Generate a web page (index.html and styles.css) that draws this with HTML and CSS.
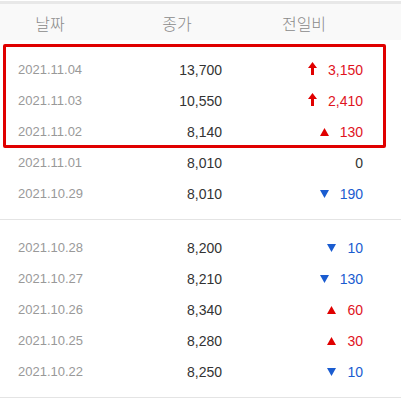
FILE: index.html
```html
<!DOCTYPE html>
<html lang="ko">
<head>
<meta charset="utf-8">
<link rel="stylesheet" href="styles.css">
</head>
<body>
<div class="board">
  <div class="head">
    <div class="hcell">날짜</div>
    <div class="hcell">종가</div>
    <div class="hcell">전일비</div>
  </div>
  <div class="section first">
    <div class="row"><span class="date">2021.11.04</span><span class="price">13,700</span><span class="chg up"><svg class="arr" width="9" height="13" viewBox="0 0 9 13"><path d="M4.5 0 L9 6 L6 6 L6 13 L3 13 L3 6 L0 6 Z"/></svg>3,150</span></div>
    <div class="row"><span class="date">2021.11.03</span><span class="price">10,550</span><span class="chg up"><svg class="arr" width="9" height="13" viewBox="0 0 9 13"><path d="M4.5 0 L9 6 L6 6 L6 13 L3 13 L3 6 L0 6 Z"/></svg>2,410</span></div>
    <div class="row"><span class="date">2021.11.02</span><span class="price">8,140</span><span class="chg up"><svg class="tri" width="9" height="8" viewBox="0 0 9 8"><path d="M4.5 0 L9 8 L0 8 Z"/></svg>130</span></div>
    <div class="row"><span class="date">2021.11.01</span><span class="price">8,010</span><span class="chg flat">0</span></div>
    <div class="row"><span class="date">2021.10.29</span><span class="price">8,010</span><span class="chg down"><svg class="tri" width="9" height="8" viewBox="0 0 9 8"><path d="M0 0 L9 0 L4.5 8 Z"/></svg>190</span></div>
    <div class="mark"></div>
  </div>
  <div class="section">
    <div class="row"><span class="date">2021.10.28</span><span class="price">8,200</span><span class="chg down"><svg class="tri" width="9" height="8" viewBox="0 0 9 8"><path d="M0 0 L9 0 L4.5 8 Z"/></svg>10</span></div>
    <div class="row"><span class="date">2021.10.27</span><span class="price">8,210</span><span class="chg down"><svg class="tri" width="9" height="8" viewBox="0 0 9 8"><path d="M0 0 L9 0 L4.5 8 Z"/></svg>130</span></div>
    <div class="row"><span class="date">2021.10.26</span><span class="price">8,340</span><span class="chg up"><svg class="tri" width="9" height="8" viewBox="0 0 9 8"><path d="M4.5 0 L9 8 L0 8 Z"/></svg>60</span></div>
    <div class="row"><span class="date">2021.10.25</span><span class="price">8,280</span><span class="chg up"><svg class="tri" width="9" height="8" viewBox="0 0 9 8"><path d="M4.5 0 L9 8 L0 8 Z"/></svg>30</span></div>
    <div class="row"><span class="date">2021.10.22</span><span class="price">8,250</span><span class="chg down"><svg class="tri" width="9" height="8" viewBox="0 0 9 8"><path d="M0 0 L9 0 L4.5 8 Z"/></svg>10</span></div>
  </div>
</div>
</body>
</html>
```
FILE: styles.css
```css
html, body {
  margin: 0;
  padding: 0;
  background: #fff;
}
body {
  font-family: "Liberation Sans", Arial, sans-serif;
}
.board {
  width: 401px;
  padding-top: 1px;
}
.head {
  display: grid;
  grid-template-columns: 100px 154px 100px;
  height: 36px;
  align-items: center;
  background: #f9f9f9;
  border-top: 3px solid #e8e8e8;
  font-family: "Noto Sans CJK KR", sans-serif;
  font-weight: 300;
  font-size: 16px;
  color: #8a8a8a;
}
.hcell {
  text-align: center;
  padding-top: 2px;
}
.section {
  position: relative;
  padding: 12px 0 10px;
  border-bottom: 1px solid #e4e4e4;
}
.section.first {
  padding-top: 14px;
}
.row {
  display: grid;
  grid-template-columns: 100px 122px 141px;
  height: 31px;
  align-items: center;
}
.date {
  padding-left: 18px;
  font-size: 13px;
  color: #999;
}
.price {
  text-align: right;
  font-size: 14px;
  color: #333;
}
.chg {
  display: flex;
  justify-content: flex-end;
  align-items: center;
  font-size: 14px;
}
.up { color: #e0141e; fill: #e00000; }
.down { color: #1a5cd0; fill: #1a5cd0; }
.flat { color: #333; }
.arr {
  margin-right: 11px;
  margin-top: -2px;
}
.tri {
  margin-right: 11px;
}
.mark {
  position: absolute;
  left: 3px;
  top: 4px;
  width: 377px;
  height: 98px;
  border: 3px solid #e00000;
  border-radius: 2px;
}
```
